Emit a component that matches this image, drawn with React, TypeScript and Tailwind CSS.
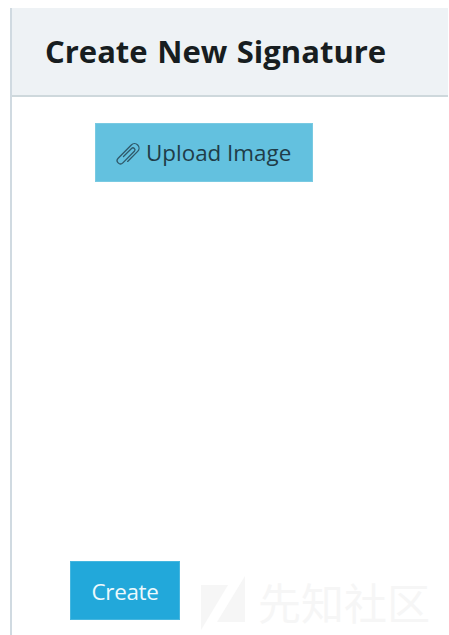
function Paperclip() {
  return (
    <svg className="mt-px h-6 w-6 shrink-0" viewBox="0 0 24 24" fill="none" stroke="#2f5869" strokeWidth="1.3" strokeLinecap="round" strokeLinejoin="round" overflow="visible">
      <path transform="translate(.7 0) rotate(-45 12 12)" d="M6 16.5h14.2a4.5 4.5 0 0 0 0-9H1.6a3.3 3.3 0 0 0 0 6.6h16.3a2 2 0 0 0 0-4H6.5" />
    </svg>
  );
}

function Watermark() {
  return (
    <div className="ml-[21px] mt-[14px] flex items-start text-[#f6f6f6]">
      <svg className="mt-px h-[54px] w-11 shrink-0" viewBox="0 0 44 54" fill="currentColor">
        <path d="M0 9h27L0 54zM44 0v46H16z" />
      </svg>
      <span className="-mt-px ml-[13px] whitespace-nowrap font-['Noto_Sans_CJK_SC',sans-serif] text-[43px] leading-[54px]">先知社区</span>
    </div>
  );
}

export default function App() {
  return (
    <div className="flex h-[635px] w-[449px] flex-col overflow-hidden bg-white pl-[10px] pt-2 pr-px font-['Open_Sans','Noto_Sans',sans-serif] text-[#172126]">
      <div className="flex min-h-0 flex-1 flex-col border-l-2 border-[#d0dae1]">
        <header className="flex h-[89px] shrink-0 items-center border-b-2 border-[#ced8dc] bg-[#eef2f5] pb-0.5 pl-[33px]">
          <h1 className="whitespace-nowrap text-[31px] font-bold leading-10 text-[#171d20] [word-spacing:1.5px]">Create New Signature</h1>
        </header>
        <main className="flex flex-col items-start">
          <button className="ml-[83px] mt-[26px] flex h-[59px] w-[218px] items-center border border-[#79cae2] bg-[#63c1df] pl-5 pt-px text-[#203c48]">
            <Paperclip />
            <span className="ml-[6px] whitespace-nowrap text-[22.4px] leading-8">Upload Image</span>
          </button>
          <div className="ml-[58px] mt-[379px] flex items-start">
            <button className="flex h-[59px] w-[110px] items-center justify-center border border-[#45b6df] bg-[#22a8da] pt-[3px] text-[22.4px] leading-8 tracking-[-0.3px] text-[#edf9fd]">Create</button>
            <Watermark />
          </div>
        </main>
      </div>
    </div>
  );
}
